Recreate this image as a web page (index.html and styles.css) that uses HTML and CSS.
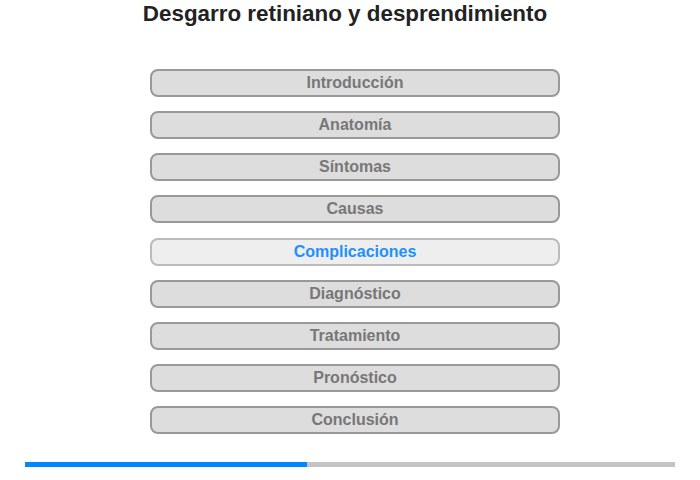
FILE: index.html
```html
<!DOCTYPE html>
<html>
<head>
  <title>Desgarro retiniano y desprendimiento</title>
  <link rel="stylesheet" href="styles.css">
</head>
<body>
  <h1 class="title">Desgarro retiniano y desprendimiento</h1>
  <div class="menu">
    <div class="item">Introducción</div>
    <div class="item">Anatomía</div>
    <div class="item">Síntomas</div>
    <div class="item">Causas</div>
    <div class="item active">Complicaciones</div>
    <div class="item">Diagnóstico</div>
    <div class="item">Tratamiento</div>
    <div class="item">Pronóstico</div>
    <div class="item">Conclusión</div>
  </div>
  <div class="progress">
    <div class="progress-fill" style="width: 43.4%"></div>
  </div>
</body>
</html>
```

FILE: styles.css
```css
body {
  margin: 0;
  padding: 0;
  font-family: "Liberation Sans", Arial, sans-serif;
  background-color: #fff;
}

.title {
  margin: 0;
  padding: 1px 10px 0 0;
  height: 68px;
  font-size: 22.4px;
  line-height: 26px;
  font-weight: bold;
  text-align: center;
  color: #222;
}

.menu {
  display: flex;
  flex-direction: column;
  align-items: center;
  gap: 14.15px;
  padding-left: 10px;
}

.item {
  box-sizing: border-box;
  width: 410px;
  height: 28px;
  line-height: 24px;
  border: 2px solid #999;
  border-radius: 8px;
  background-color: #ddd;
  color: #777;
  font-size: 16px;
  font-weight: bold;
  text-align: center;
}

.item.active {
  border-color: #bbb;
  background-color: #eee;
  color: #1e90ff;
}

.progress {
  margin: 28px 25px 0;
  height: 5px;
  background-color: #c4c4c4;
}

.progress-fill {
  height: 100%;
  background-color: #0088ff;
}
```
